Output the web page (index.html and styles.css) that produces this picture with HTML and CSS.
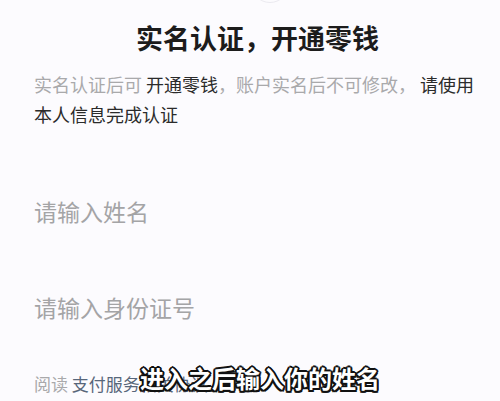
FILE: index.html
```html
<!DOCTYPE html>
<html lang="zh-CN">
<head>
<meta charset="utf-8">
<title>实名认证，开通零钱</title>
<link rel="stylesheet" href="styles.css">
</head>
<body>
<div class="page">
  <div class="avatar"></div>
  <h1 class="title">实名认证，开通零钱</h1>
  <p class="desc"><span class="muted">实名认证后可</span> <span class="strong">开通零钱</span><span class="muted">，账户实名后不可修改，</span> <span class="strong">请使用</span><span class="strong">本人信息完成认证</span></p>
  <div class="field"><input class="input" type="text" placeholder="请输入姓名"></div>
  <div class="field field-id"><input class="input" type="text" placeholder="请输入身份证号"></div>
  <p class="agree"><span class="muted">阅读</span> <span class="link">支付服务相关协议</span></p>
  <div class="caption">进入之后输入你的姓名</div>
</div>
</body>
</html>
```
FILE: styles.css
```css
* { box-sizing: border-box; }
html, body { margin: 0; padding: 0; }
body {
  background: #fcfbfe;
  font-family: "Noto Sans CJK SC", "Noto Sans", sans-serif;
  width: 500px;
  height: 401px;
  overflow: hidden;
}
.page {
  display: flow-root;
  position: relative;
  width: 500px;
  height: 401px;
  padding: 0 25px 0 34px;
}
.avatar {
  width: 38px;
  height: 38px;
  margin: -35px 0 0 217px;
  border: 1px solid #ebeaf0;
  border-radius: 50%;
}
.title {
  margin: 17px 0 0 0;
  padding-left: 102px;
  font-size: 27px;
  line-height: 36px;
  font-weight: 700;
  color: #1c1c1c;
  letter-spacing: 0;
}
.desc {
  margin: 13px 0 0 0;
  font-size: 18px;
  line-height: 30px;
  color: #333;
}
.muted { color: #a9a9ab; }
.strong { color: #2b2b2b; }
.field {
  margin-top: 66px;
  height: 32px;
}
.field-id { margin-top: 64px; }
.input {
  display: block;
  width: 100%;
  height: 32px;
  padding: 0;
  margin: 0;
  border: none;
  outline: none;
  background: transparent;
  font-family: inherit;
  font-size: 23px;
  line-height: 32px;
  color: #333;
}
.input::placeholder { color: #a4a4a6; }
.agree {
  margin: 46px 0 0 0;
  font-size: 17px;
  line-height: 30px;
}
.link { color: #58667a; }
.caption {
  position: absolute;
  left: 140px;
  top: 361px;
  font-size: 24px;
  line-height: 34px;
  font-weight: 700;
  color: #fff;
  white-space: nowrap;
  text-shadow:
    -1.5px -1.5px 0 #111, 1.5px -1.5px 0 #111, -1.5px 1.5px 0 #111, 1.5px 1.5px 0 #111,
    0 -2px 0 #111, 0 2px 0 #111, -2px 0 0 #111, 2px 0 0 #111;
}
```
